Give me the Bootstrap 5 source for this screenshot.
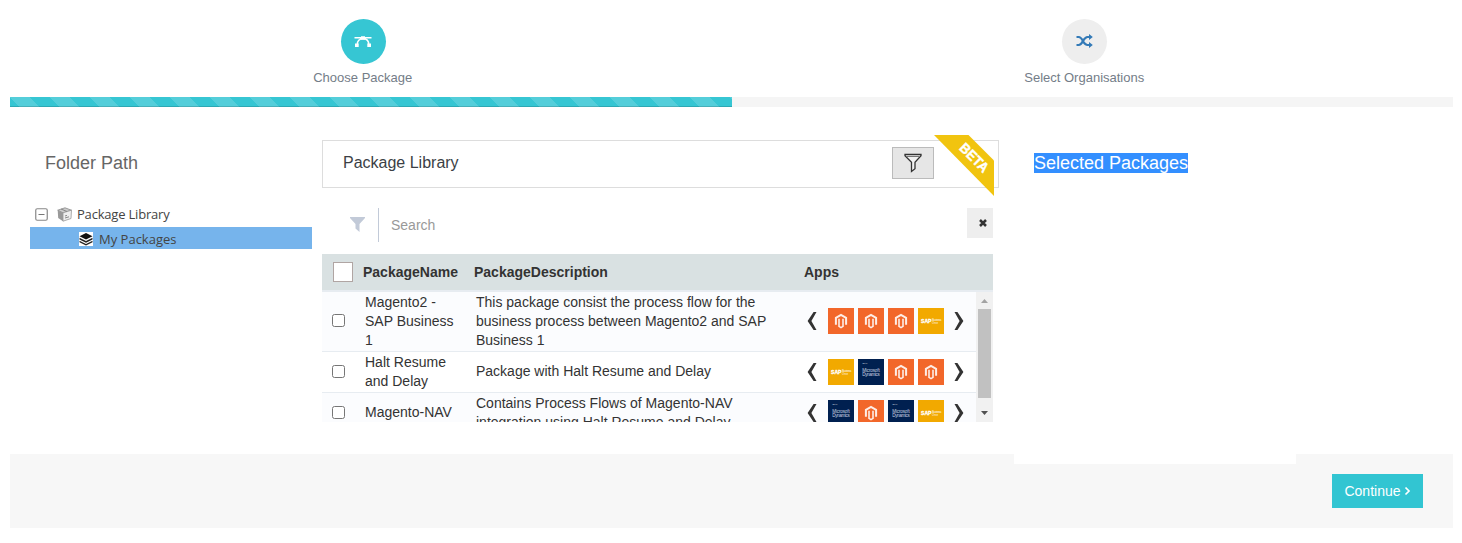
<!DOCTYPE html>
<html lang="en">
<head>
<meta charset="utf-8">
<meta name="viewport" content="width=device-width, initial-scale=1">
<title>Package Library</title>
<link rel="stylesheet" href="https://cdn.jsdelivr.net/npm/bootstrap@5.3.0/dist/css/bootstrap.min.css">
<style>
body{font-family:"Liberation Sans",Arial,sans-serif;font-size:14px;line-height:19px;color:#333;background:#fff;overflow:hidden}
.page{margin:0 9px 0 10px;height:528px}
.steps{height:97px;margin-left:-8px;margin-right:8px;padding-top:19px}
.step-dot{width:45px;height:45px;background:#eee}
.step-dot.on{background:#36c6d3;margin-left:1px}
.step-label{font-size:13px;line-height:16px;margin-top:6px;color:#747d88}
.wizard-bar{height:10px;border-radius:0;background:#f5f5f5;--bs-progress-bar-bg:#36c6d3}
.wizard-bar .progress-bar{background-size:40px 40px;box-shadow:inset 0 -1px 0 rgba(0,0,0,.15)}
.main{height:347px}
.tree-col{width:292px;margin-left:20px;padding-right:10px}
.pane-title{font-size:18px;line-height:20px;color:#666}
.tree{font-family:"Open Sans","Noto Sans",sans-serif;font-size:13px;line-height:22px;color:#444;letter-spacing:-.2px;margin-top:30px}
.tree-row{height:22px;margin-bottom:2px}
.tree-row.picked{background:#76b4ec;padding-left:49px;padding-top:1px}
.picked span{letter-spacing:0}
.lib-col{width:677px;padding-top:33px}
.lib-head{height:48px;border:1px solid #ddd;padding-left:20px}
.lib-title{font-size:16px;color:#3b3f45}
.filter-btn{width:42px;height:32px;background:#e6e6e6;border:1px solid #bbb;border-radius:0;margin-right:64px;margin-top:-3px}
.ribbon{right:4px;top:-6px}
.search-row{width:671px;height:34px;margin-top:20px;padding-left:28px}
.search-sep{width:1px;background:#c2cad8;height:34px;margin:0 12px 0 13px}
.search-input{font-size:14px;color:#999}
.search-input::placeholder{color:#999;opacity:1}
.clear-btn{width:26px;height:30px;background:#eee;margin-bottom:4px;padding-left:6px}
.pk-table{width:671px;margin-top:12px}
.pk-head{height:38px;background:#d9e1e2;border-bottom:2px solid #e7ecf1;font-weight:700;padding-left:11px}
.check-all{width:20px;height:20px;background:#fff;border:1px solid #b0a5a3}
.pk-scroll{height:130px}
.pk-row{border-bottom:1px solid #e7ecf1;padding:0 0 1px 10px}
.pk-row:nth-child(odd){background:#fbfcfe}
.tick{width:13px;height:13px;border:1px solid #767676;border-radius:2.5px;background:#fff;margin:0 20px 1px 0}
.c-name{width:111px;padding-right:16px}
.c-desc{width:331px;padding-right:30px}
.app-tile{width:26px;height:26px;margin-right:4px}
.scroll-track{width:17px;background:#f1f1f1}
.thumb{width:13px;height:89px;background:#c1c1c1}
.sel-col{width:282px;height:357px;margin-left:15px;background:#fff;padding:46px 0 0 20px}
.sel-title{font-size:18px;line-height:20px;background:#338fff;color:#fff;height:20px}
.foot{height:74px;background:#f7f7f7;padding:0 30px}
.go-btn{width:91px;height:34px;background:#32c5d2;color:#fff;border:0;border-radius:0;font-size:14px;line-height:20px;padding:0}
.go-btn:hover{background:#26a1ab;color:#fff}
</style>
</head>
<body>
<svg width="0" height="0" class="position-absolute" aria-hidden="true">
<defs>
<symbol id="magento" viewBox="0 0 26 26"><path fill="#f2672a" d="M0 0h26v26H0z"/><path d="M7.900 16.800V9.900L13 7l5.100 2.900v6.900" fill="none" stroke="#fff" stroke-width="2" opacity=".88"/><path d="M11 10.800v7.600l2 1.200 2-1.200v-7.600" fill="none" stroke="#fff" stroke-width="1.600" opacity=".88"/></symbol>
<symbol id="sap" viewBox="0 0 26 26"><path fill="#f2a900" d="M0 0h26v26H0z"/><text x="3" y="15.300" font-family="Liberation Sans,sans-serif" font-weight="700" font-size="5.600" stroke="#fff" stroke-width=".3" textLength="10.500" lengthAdjust="spacingAndGlyphs" fill="#fff">SAP</text><text x="14" y="13" font-family="Liberation Sans,sans-serif" font-size="2.800" textLength="9.500" fill="#fff">Business</text><text x="14" y="15.600" font-family="Liberation Sans,sans-serif" font-size="2.800" textLength="6" fill="#fff">One</text></symbol>
<symbol id="dyn" viewBox="0 0 26 26"><path fill="#002050" d="M0 0h26v26H0z"/><text x="4.500" y="4.500" font-family="Liberation Sans,sans-serif" font-size="2.500" fill="#fff">NAV</text><g font-family="Liberation Sans,sans-serif" font-size="4.600" fill="#c8d2e0"><text x="4.200" y="13.300" textLength="17.500">Microsoft</text><text x="4.200" y="17.300" textLength="17.500">Dynamics</text></g></symbol>
<symbol id="prev" viewBox="0 0 10 18"><path d="M6.600 0h2.900L4.400 9l5.100 9H6.600L.6 9z" fill="#333"/></symbol>
<symbol id="next" viewBox="0 0 10 18"><path d="M3.400 0H.5l5.100 9-5.100 9h2.900l6-9z" fill="#333"/></symbol>
</defs>
</svg>
<div class="page">
  <div class="steps d-flex text-center">
    <div class="w-50 d-flex flex-column align-items-center">
      <div class="step-dot on rounded-circle d-flex align-items-center justify-content-center">
        <svg width="18" height="14" viewBox="0 0 18 14"><path d="M.5 2.700h17M3.300 9.500C3.300 5.700 5.300 3.800 9 3.800s5.700 1.900 5.700 5.700" fill="none" stroke="#fff" stroke-width="1.500"/><path d="M7 1.300h4v3.400H7zM1 8.500h3.700v3.500H1zM13.300 8.500H17v3.500h-3.700z" fill="#fff"/></svg>
      </div>
      <div class="step-label">Choose Package</div>
    </div>
    <div class="w-50 d-flex flex-column align-items-center">
      <div class="step-dot rounded-circle d-flex align-items-center justify-content-center">
        <svg width="17" height="14" viewBox="0 0 17 14" style="margin-top:-2px"><g fill="none" stroke="#337ab7" stroke-width="2.200"><path d="M.5 3h2.200C7 3 7 11 11.500 11H14M.5 11h2.200C7 11 7 3 11.500 3H14"/></g><path d="M13 0l3.800 3L13 6zM13 8l3.800 3L13 14z" fill="#337ab7"/></svg>
      </div>
      <div class="step-label">Select Organisations</div>
    </div>
  </div>
  <div class="progress wizard-bar"><div class="progress-bar progress-bar-striped w-50"></div></div>

  <div class="main d-flex">
    <div class="tree-col">
      <div class="pane-title" style="padding:46px 0 0 15px">Folder Path</div>
      <div class="tree">
        <div class="tree-row d-flex align-items-center">
          <svg width="13" height="13" viewBox="0 0 13 13" style="margin:0 9px 0 5px"><rect x=".75" y=".75" width="11.500" height="11.500" rx="1.500" fill="#fff" stroke="#888" stroke-width="1.200"/><path d="M3.500 6.500h6" stroke="#777"/></svg>
          <svg width="15" height="15" viewBox="0 0 15 15" class="me-1"><path d="M.7 3.200L8 .8l6.500 2.400L6 5.800z" fill="#ccc" stroke="#888" stroke-width=".8"/><path d="M.7 3.200L6 5.800v8.400L1.200 11z" fill="#999"/><path d="M6 5.800l8.500-2.600-.5 8.300-8 2.700z" fill="#eee" stroke="#999" stroke-width=".8"/><path d="M4 2l6 2.500M8 11l4-1.200M8 9l2-.6" stroke="#888" fill="none"/></svg>
          <span style="margin-left:1px">Package Library</span>
        </div>
        <div class="tree-row picked d-flex align-items-center">
          <svg width="14" height="14" viewBox="0 0 14 14"><path d="M0 0h14v14H0z" fill="#fff"/><path d="M7 1l6.500 3.200L7 7.400.5 4.200z" fill="#111"/><path d="M.5 5.700L7 8.900l6.500-3.200v1.900L7 10.800.5 7.600zM.5 8.700L7 11.900l6.500-3.200v1.600L7 13.500.5 10.300z" fill="#222"/></svg>
          <span style="margin-left:6px">My Packages</span>
        </div>
      </div>
    </div>

    <div class="lib-col">
      <div class="lib-head d-flex align-items-center justify-content-between position-relative">
        <div class="lib-title" style="margin-top:-3px">Package Library</div>
        <button class="btn filter-btn p-0 d-flex align-items-center justify-content-center" aria-label="Filter"><svg width="18" height="20" viewBox="0 0 18 20"><path d="M1 1.500h16v1.300l-6 6.400v6.600L7.500 18.500V9.200L1 2.800z" fill="#f2f2f2" stroke="#333" stroke-width="1.300"/><path d="M3 3.500h12" stroke="#555" stroke-width=".8"/></svg></button>
        <svg class="ribbon position-absolute" width="60" height="61" viewBox="0 0 60 61"><path d="M0 0h34.500L60 25.500V61z" fill="#f1c40f"/><text transform="translate(24.600 13.700) rotate(45)" font-family="Liberation Sans,sans-serif" font-weight="700" font-size="14" stroke="#fff" stroke-width=".4" textLength="35" lengthAdjust="spacingAndGlyphs" fill="#fff">BETA</text></svg>
      </div>
      <div class="search-row d-flex align-items-center">
        <svg width="15" height="15" viewBox="0 0 15 15" style="margin-top:-2px"><path d="M0 0h15v1L9.500 7v8L5.500 11.500V7L0 1z" fill="#c2cad8"/></svg>
        <div class="search-sep"></div>
        <input class="search-input flex-fill border-0 p-0" placeholder="Search" aria-label="Search">
        <div class="clear-btn d-flex align-items-center justify-content-center"><svg width="8" height="8" viewBox="0 0 8 8"><path d="M1 1l6 6M7 1L1 7" stroke="#333" stroke-width="2.500"/></svg></div>
      </div>

      <div class="pk-table">
        <div class="pk-head d-flex align-items-center">
          <div class="check-all"></div>
          <div style="width:111px;margin-left:10px">PackageName</div>
          <div style="width:330px">PackageDescription</div>
          <div>Apps</div>
        </div>
        <div class="pk-scroll d-flex overflow-hidden">
          <div class="flex-fill" id="rows"></div>
          <div class="scroll-track d-flex flex-column align-items-center justify-content-between">
            <svg width="17" height="17" viewBox="0 0 17 17"><path d="M5 11l3.500-4 3.500 4z" fill="#a3a3a3"/></svg>
            <div class="thumb"></div>
            <svg width="17" height="17" viewBox="0 0 17 17" style="margin-top:7px"><path d="M5 6l3.500 4L12 6z" fill="#505050"/></svg>
          </div>
        </div>
      </div>
    </div>

    <div class="sel-col position-relative"><span class="sel-title d-inline-block">Selected Packages</span></div>
  </div>

  <div class="foot d-flex align-items-center justify-content-end">
    <button class="btn go-btn d-flex align-items-center justify-content-center">Continue<svg width="7" height="10" viewBox="0 0 7 10" style="margin:0 0 0 3px"><path d="M1.500 1.500L5 5 1.500 8.500" fill="none" stroke="#fff" stroke-width="1.700"/></svg></button>
  </div>
</div>
<script src="https://cdn.jsdelivr.net/npm/bootstrap@5.3.0/dist/js/bootstrap.bundle.min.js"></script>
<script>
const packages = [
  {h:60, name:'Magento2 - SAP Business 1', desc:'This package consist the process flow for the business process between Magento2 and SAP Business 1', apps:['magento','magento','magento','sap']},
  {h:41, name:'Halt Resume and Delay', desc:'Package with Halt Resume and Delay', apps:['sap','dyn','magento','magento']},
  {h:41, name:'Magento-NAV', desc:'Contains Process Flows of Magento-NAV integration using Halt Resume and Delay', apps:['dyn','magento','dyn','sap']}
];
document.getElementById('rows').innerHTML = packages.map(p => `
<div class="pk-row d-flex align-items-center" style="height:${p.h}px">
  <div class="tick flex-shrink-0"></div>
  <div class="c-name flex-shrink-0">${p.name}</div>
  <div class="c-desc flex-shrink-0">${p.desc}</div>
  <div class="d-flex align-items-center"><svg width="10" height="18" style="margin-right:11px"><use href="#prev"/></svg>${p.apps.map(a => `<svg class="app-tile"><use href="#${a}"/></svg>`).join('')}<svg width="10" height="18" style="margin-left:6px"><use href="#next"/></svg></div>
</div>`).join('');
</script>
</body>
</html>
